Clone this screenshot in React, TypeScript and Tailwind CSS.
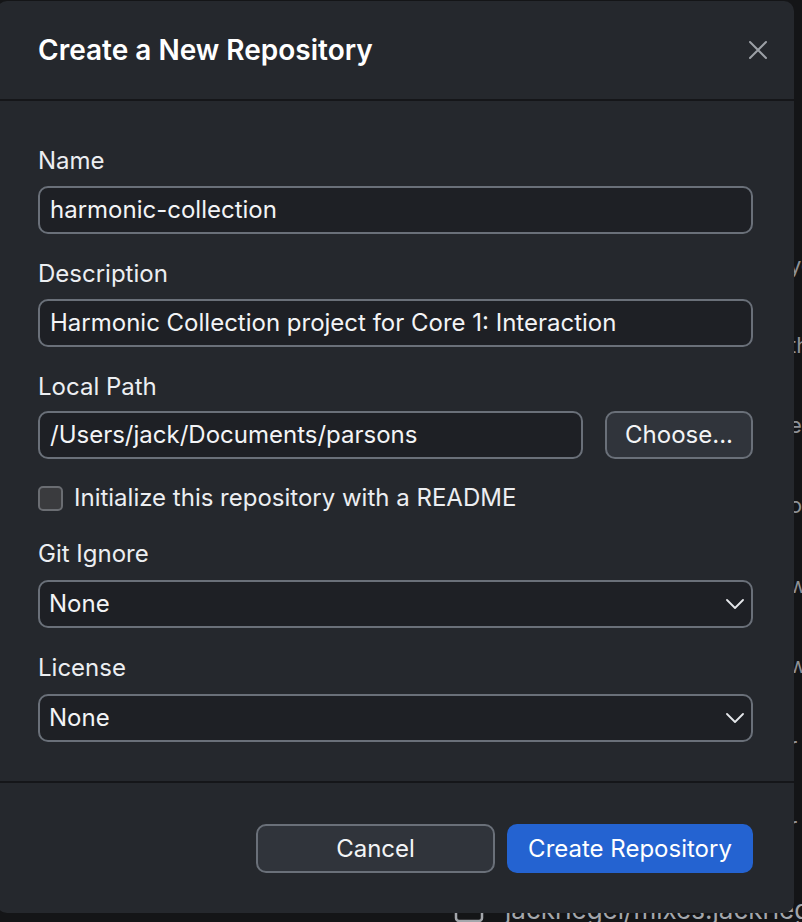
import React from "react";

const font = { fontFamily: "Inter, 'Noto Sans', sans-serif" };

function Chevron() {
  return (
    <svg width="18" height="10" viewBox="0 0 18 10" fill="none" className="shrink-0">
      <polyline points="1,1 9,9 17,1" stroke="#e5e7eb" strokeWidth="1.8" strokeLinecap="round" strokeLinejoin="round" />
    </svg>
  );
}

function Label({ children }: { children: React.ReactNode }) {
  return <div className="text-[24px] leading-[28px] text-[#eceef1]">{children}</div>;
}

function TextInput({ value }: { value: string }) {
  return (
    <div className="h-[48px] rounded-[10px] border-2 border-[#6a7079] bg-[#1e2025] flex items-center pl-[10px] text-[24px] leading-[28px] text-[#f3f4f6] whitespace-nowrap overflow-hidden">
      {value}
    </div>
  );
}

function Select({ value }: { value: string }) {
  return (
    <div className="h-[48px] rounded-[10px] border-2 border-[#6a7079] bg-[#1e2025] flex items-center justify-between pl-[9px] pr-[7px] text-[24px] leading-[28px] text-[#f3f4f6]">
      <span>{value}</span>
      <Chevron />
    </div>
  );
}

export default function App() {
  const sideLines = ["your", "the", "e =", "o)", "with", "with", "r", "r"];
  return (
    <div className="relative w-[802px] h-[922px] overflow-hidden bg-[#141517]" style={font}>
      {/* background app content */}
      <div className="flex flex-col">
        <div className="flex flex-col pl-[789px] pt-[253px] gap-[56px] text-[22px] leading-[24px] text-[#8e9196]">
          {sideLines.map((l, i) => (
            <div key={i} className="whitespace-nowrap">{l}</div>
          ))}
        </div>
        <div className="mt-[58px] flex items-center pl-[454px] text-[26px] leading-[30px] text-[#a3a6ab] whitespace-nowrap">
          <svg width="30" height="30" viewBox="0 0 30 30" fill="none" className="shrink-0">
            <rect x="2" y="4" width="26" height="22" rx="3" stroke="#a3a6ab" strokeWidth="2.5" />
          </svg>
          <span className="shrink-0 ml-[21px]">jackriegel/mixes.jackriegel.com</span>
        </div>
      </div>

      {/* dialog overlay */}
      <div className="absolute left-[-3px] top-[1px] w-[797px] h-[912px] rounded-[10px] bg-[#25282d] flex flex-col">
        <div className="h-[100px] shrink-0 flex items-center justify-between pl-[41px] pr-[26px] border-b-2 border-[#151619]">
          <div className="text-[28px] leading-[34px] font-semibold text-white">Create a New Repository</div>
          <svg width="20" height="20" viewBox="0 0 20 20" fill="none" className="shrink-0">
            <path d="M2 2 L18 18 M18 2 L2 18" stroke="#9ca0a6" strokeWidth="2" strokeLinecap="round" />
          </svg>
        </div>

        <div className="flex flex-col pl-[41px] pr-[41px] pt-[46px] pb-[39px] border-b-2 border-[#151619]">
          <Label>Name</Label>
          <div className="mt-[11px]"><TextInput value="harmonic-collection" /></div>

          <div className="mt-[26px]"><Label>Description</Label></div>
          <div className="mt-[11px]"><TextInput value="Harmonic Collection project for Core 1: Interaction" /></div>

          <div className="mt-[26px]"><Label>Local Path</Label></div>
          <div className="mt-[10px] flex gap-[22px]">
            <div className="flex-1"><TextInput value="/Users/jack/Documents/parsons" /></div>
            <div className="w-[148px] shrink-0 h-[48px] rounded-[10px] border-2 border-[#6a7079] bg-[#30343b] flex items-center justify-center text-[24px] leading-[28px] text-[#f3f4f6]">
              Choose...
            </div>
          </div>

          <div className="mt-[25px] h-[28px] flex items-center gap-[11px]">
            <div className="w-[25px] h-[25px] shrink-0 rounded-[5px] border-2 border-[#6a6d72] bg-[#3a3b3e]" />
            <span className="text-[24px] leading-[28px] text-[#eceef1]">Initialize this repository with a README</span>
          </div>

          <div className="mt-[28px]"><Label>Git Ignore</Label></div>
          <div className="mt-[12px]"><Select value="None" /></div>

          <div className="mt-[26px]"><Label>License</Label></div>
          <div className="mt-[12px]"><Select value="None" /></div>
        </div>

        <div className="flex justify-end gap-[12px] pr-[41px] pt-[41px]">
          <div className="w-[239px] h-[49px] rounded-[10px] border-2 border-[#6a7079] bg-[#30343b] flex items-center justify-center text-[24px] leading-[28px] text-[#f3f4f6]">
            Cancel
          </div>
          <div className="w-[246px] h-[49px] rounded-[10px] bg-[#2463d1] flex items-center justify-center text-[24px] leading-[28px] text-white">
            Create Repository
          </div>
        </div>
      </div>
    </div>
  );
}
